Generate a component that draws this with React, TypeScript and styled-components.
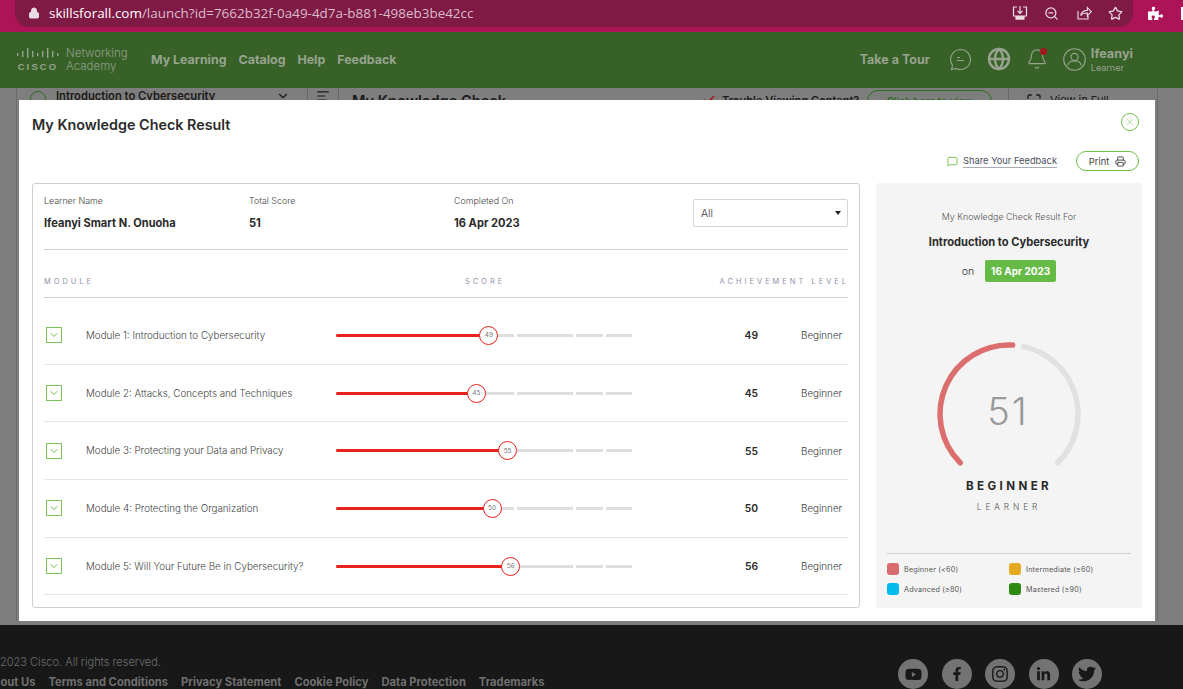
import React from 'react';
import styled, { createGlobalStyle } from 'styled-components';
import { Lock, ZoomOut, Star, Globe, Bell, MessageSquare, Printer, ChevronDown, X, AlignLeft, Maximize, Check } from 'lucide-react';
import { FaPuzzlePiece, FaYoutube, FaFacebookF, FaInstagram, FaLinkedinIn, FaTwitter } from 'react-icons/fa';

const Global = createGlobalStyle`
  html, body { margin: 0; padding: 0; background: #181818; }
  * { box-sizing: border-box; }
  body { font-family: Inter, "Liberation Sans", sans-serif; }
`;

const Page = styled.div`
  width: 1183px; height: 689px; overflow: hidden;
  display: flex; flex-direction: column;
`;

/* Browser chrome */
const BrowserBar = styled.div`
  height: 32px; flex: none; background: #ad1457; display: flex; align-items: flex-start;
  padding-left: 15px; position: relative; color: #fff; overflow: hidden;
`;
const UrlPill = styled.div`
  width: 1118px; flex: none; height: 27px; background: #7f1a45; border-radius: 0 0 14px 14px;
  display: flex; align-items: center; padding: 0 10px 1px 13px;
  font: 400 13.45px "Open Sans", sans-serif; color: #d9bccb;
`;
const Host = styled.span`color: #fff; margin-left: 9px;`;
const PillIcons = styled.div`
  margin-left: auto; display: flex; align-items: center; gap: 16.5px; color: #e9dbe2;
`;
const ExtIcons = styled.div`
  margin-left: 15px; height: 27px; display: flex; align-items: center; gap: 18px; flex: none;
`;
const EdgeIcon = styled.div`width: 12px; height: 13px; border: 2px solid #fff;`;

/* Site nav */
const SiteNav = styled.div`
  height: 56px; flex: none; background: #386127; display: flex; align-items: center;
  padding: 0 50px 2px 16px; color: #96a38f;
`;
const LogoMark = styled.div`
  width: 44px; display: flex; flex-direction: column; align-items: center; margin-top: 1px;
`;
const CiscoWord = styled.span`
  font: 700 9.4px "Liberation Sans", sans-serif; letter-spacing: 2.2px; line-height: 10px; margin-top: 1px;
`;
const LogoText = styled.div`
  margin: 2px 0 0 6px; width: 85px; font-weight: 300; font-size: 11.5px; line-height: 13px; color: #8f9d88;
`;
const NavLink = styled.span`
  font-weight: 700; font-size: 12.4px; margin-right: 12px; white-space: nowrap;
`;
const NavRight = styled.div`margin-left: auto; display: flex; align-items: center;`;
const Tour = styled.span`font-weight: 700; font-size: 12.5px; margin-right: 19px;`;
const BellWrap = styled.div`position: relative; display: flex; margin: 0 15px 0 15px;`;
const Dot = styled.i`
  position: absolute; top: 0; right: 1px; width: 7px; height: 7px; border-radius: 50%; background: #a3191f;
`;
const UserText = styled.div`margin: 3px 0 0 5px; display: flex; flex-direction: column;`;
const UserName = styled.span`font-weight: 700; font-size: 12.7px; line-height: 14px;`;
const UserRole = styled.span`font-weight: 400; font-size: 9px; line-height: 13px;`;

/* Dimmed page behind the modal */
const Stage = styled.div`
  flex: 1; position: relative; background: #7e7e7e; overflow: hidden; display: flex; color: #1a1a1a;
`;
const Behind = styled.div`
  flex: 1; margin: 0 25px 4px 16px; display: flex; align-items: flex-start;
  border-left: 1px solid #6c6c6c; border-right: 1px solid #6c6c6c;
`;
const BehindCourse = styled.div`
  width: 290px; height: 16px; display: flex; align-items: center; padding-left: 13px; flex: none;
  font-weight: 600; font-size: 11.2px; white-space: nowrap;
`;
const BehindTools = styled.div`
  width: 32px; height: 24px; flex: none; display: flex; justify-content: center; padding-top: 1px;
  border-left: 1px solid #666; border-right: 1px solid #666;
`;
const BehindDisc = styled.i`
  width: 16px; height: 16px; border-radius: 50%; border: 1.5px solid #2d6a1e; margin: 6px 10px 0 0; flex: none;
`;
const BehindTitle = styled.div`
  margin-left: 13px; font-weight: 600; font-size: 14.6px; padding-top: 4px; width: 350px; white-space: nowrap;
`;
const BehindNote = styled.div`
  display: flex; gap: 6px; font-weight: 600; font-size: 11px; padding-top: 5px; width: 165px; white-space: nowrap;
`;
const BehindBtn = styled.div`
  width: 125px; height: 22px; border: 1.5px solid #2d6a1e; border-radius: 12px; margin-top: 2px; flex: none;
  color: #2d6a1e; font-weight: 600; font-size: 10px; text-align: center; padding-top: 4px;
`;
const BehindFull = styled.div`
  display: flex; gap: 8px; font-size: 11px; padding: 5px 0 0 17px; margin-left: 16px; white-space: nowrap;
  border-left: 1px solid #666; height: 24px;
`;

/* Modal */
const Modal = styled.div`
  position: absolute; left: 19px; top: 12px; width: 1136px; height: 521px;
  background: #fff; padding: 0 13px; display: flex; flex-direction: column;
`;
const ModalHead = styled.div`
  height: 83px; flex: none; display: flex; flex-direction: column;
`;
const TitleRow = styled.div`
  height: 50px; display: flex; align-items: flex-start; justify-content: space-between; padding-top: 16px;
`;
const Title = styled.h2`
  margin: 0; font-weight: 600; font-size: 14.35px; line-height: 18px; color: #2b2b2b;
`;
const CloseBtn = styled.span`
  width: 18px; height: 18px; margin: -3px 3px 0 0; border: 1px solid #6ebe4a; border-radius: 50%;
  color: #6ebe4a; display: flex; align-items: center; justify-content: center;
`;
const ActionRow = styled.div`
  display: flex; justify-content: flex-end; align-items: center; height: 22px; margin-right: 3px;
`;
const Feedback = styled.span`
  display: flex; align-items: center; gap: 5px; font-size: 9.3px; margin-right: 19px; color: #4a4f5c;
`;
const Underlined = styled.span`border-bottom: 1px solid #a9adb6; line-height: 12px;`;
const PrintBtn = styled.span`
  width: 63px; height: 20px; border: 1px solid #6ebe4a; border-radius: 10px; font-size: 9.3px; color: #444;
  display: flex; align-items: center; justify-content: center; gap: 6px;
`;
const Body = styled.div`
  display: grid; grid-template-columns: 828px 266px; gap: 16px; height: 425px;
`;

/* Left card */
const Card = styled.div`
  border: 1px solid #cfcfcf; border-radius: 3px; padding: 0 11px;
`;
const InfoBar = styled.div`
  height: 66px; display: flex; align-items: flex-start; border-bottom: 1px solid #cfcfcf; padding-top: 11px;
`;
const InfoCol = styled.div<{ $w: number }>`
  width: ${p => p.$w}px; display: flex; flex-direction: column;
`;
const InfoLabel = styled.span`font-weight: 300; font-size: 8.9px; line-height: 12px; color: #444;`;
const InfoValue = styled.span`font-weight: 700; font-size: 11.1px; line-height: 14px; margin-top: 9px; color: #2a2a2a;`;
const SelectBox = styled.div`
  width: 155px; height: 28px; margin-top: 4px; border: 1px solid #d6d6d6; border-radius: 2px;
  display: flex; align-items: center; justify-content: space-between; padding: 0 6px 0 7px;
  font-weight: 300; font-size: 10.5px; color: #333;
`;
const Caret = styled.i`
  width: 0; height: 0; border-left: 3.5px solid transparent; border-right: 3.5px solid transparent; border-top: 4px solid #222;
`;
const TableHead = styled.div`
  height: 48px; display: grid; grid-template-columns: 421px auto 1fr; align-items: end; padding-bottom: 10px;
  border-bottom: 1px solid #cfcfcf;
  font-weight: 400; font-size: 7.4px; line-height: 10px; letter-spacing: 3.05px; color: #8b93a9;
`;
const HeadRight = styled.span`text-align: right; white-space: nowrap; margin-right: -1px;`;
const List = styled.div`padding-top: 9px;`;
const Row = styled.div`
  height: 57.7px; display: grid; grid-template-columns: 42px 250px 296px 1fr 47px; align-items: center;
  border-bottom: 1px solid #e4e4ef;
`;
const Toggle = styled.span`
  width: 16px; height: 16px; margin-left: 2px; border: 1px solid #7cc45c; color: #6ebe4a;
  display: flex; align-items: center; justify-content: center;
`;
const ModuleName = styled.span`
  font-weight: 300; font-size: 9.8px; color: #444; white-space: nowrap;
`;
const Track = styled.div`position: relative; height: 3px; display: flex; gap: 3px;`;
const Segment = styled.i<{ $w: number }>`width: ${p => p.$w}px; height: 3px; background: #dedede;`;
const Fill = styled.i`position: absolute; left: 0; top: 0; height: 3px; background: #e8231c; border-radius: 2px;`;
const Thumb = styled.span`
  position: absolute; top: -8px; width: 19px; height: 19px; margin-left: -9.5px; border-radius: 50%;
  border: 1px solid #e8231c; background: #fff; color: #777; font-size: 6.5px;
  display: flex; align-items: center; justify-content: center;
`;
const Score = styled.span`
  text-align: right; padding-right: 43px; font-weight: 600; font-size: 10.3px; color: #2a2a2a;
`;
const Level = styled.span`font-weight: 300; font-size: 9.85px; color: #3a3a3a; white-space: nowrap;`;

/* Right panel */
const Side = styled.div`
  background: #f4f4f4; border-radius: 3px; padding: 28px 11px 0; display: flex; flex-direction: column; align-items: center;
`;
const SideLabel = styled.span`font-weight: 300; font-size: 8.9px; line-height: 12px; color: #555;`;
const SideCourse = styled.strong`font-weight: 700; font-size: 11.1px; line-height: 14px; margin-top: 12px; color: #2a2a2a;`;
const DateRow = styled.div`display: flex; align-items: center; gap: 11px; margin-top: 11px; font-weight: 300; font-size: 10.5px; color: #333;`;
const DateTag = styled.span`
  width: 71px; height: 22px; border-radius: 2px; background: #66bb47; color: #fff; font-weight: 700; font-size: 10px;
  display: flex; align-items: center; justify-content: center;
`;
const Gauge = styled.div`
  position: relative; width: 150px; height: 130px; margin-top: 57px; color: #999;
  font-weight: 300; font-size: 38px; letter-spacing: 2px;
`;
const GaugeValue = styled.span`
  position: absolute; left: 0; right: 2px; top: 52px; text-align: center; line-height: 40px;
`;
const LevelName = styled.strong`
  font-weight: 700; font-size: 11.6px; letter-spacing: 3.4px; line-height: 14px; margin-top: 10px; color: #2a2a2a;
`;
const LevelRole = styled.span`
  font-weight: 300; font-size: 8.3px; letter-spacing: 3.9px; line-height: 10px; margin-top: 9px; color: #555;
`;
const Legend = styled.div`
  margin-top: 41px; width: 244px; border-top: 1px solid #cfcfcf; padding-top: 9px;
  display: grid; grid-template-columns: 122px 122px; row-gap: 8px;
`;
const LegendItem = styled.div`
  display: flex; align-items: center; gap: 5px; font-size: 7.2px; letter-spacing: 0.2px; color: #555; height: 12px; white-space: nowrap;
`;
const Swatch = styled.i<{ $c: string }>`width: 12px; height: 12px; border-radius: 3px; background: ${p => p.$c};`;

/* Footer */
const Footer = styled.div`
  height: 64px; flex: none; background: #181818; display: flex; padding-top: 30px; color: #6f6f6f; position: relative;
`;
const FooterText = styled.div`margin-left: -10px; display: flex; flex-direction: column;`;
const Copy = styled.span`font-weight: 300; font-size: 11px; line-height: 14px;`;
const Links = styled.div`margin-left: -5px; display: flex; gap: 13px; margin-top: 6px; font-weight: 700; font-size: 11.2px; line-height: 14px; white-space: nowrap;`;
const Socials = styled.div`margin-left: auto; margin-right: 81px; display: flex; gap: 13.5px; margin-top: 4px;`;
const Social = styled.span`
  width: 30px; height: 30px; border-radius: 50%; background: #737373; color: #181818;
  display: flex; align-items: center; justify-content: center;
`;

const polar = (deg: number, r: number, c = 75) => {
  const a = (deg - 90) * Math.PI / 180;
  return `${(c + r * Math.cos(a)).toFixed(2)} ${(c + r * Math.sin(a)).toFixed(2)}`;
};
const arc = (from: number, to: number, r = 69) =>
  `M${polar(from, r)} A${r} ${r} 0 ${to - from > 180 ? 1 : 0} 1 ${polar(to, r)}`;

const modules = [
  ['Module 1: Introduction to Cybersecurity', 49],
  ['Module 2: Attacks, Concepts and Techniques', 45],
  ['Module 3: Protecting your Data and Privacy', 55],
  ['Module 4: Protecting the Organization', 50],
  ['Module 5: Will Your Future Be in Cybersecurity?', 56],
] as const;

const CiscoBars = () => (
  <svg width="44" height="13" viewBox="0 0 44 13" fill="currentColor">
    {[[1,5,3],[6,3,6],[11,0,10],[16,3,6],[21,5,3],[26,3,6],[31,0,10],[36,3,6],[41,5,3]].map(([x, y, h]) => (
      <rect key={x} x={x} y={y} width="1.4" height={h} />
    ))}
  </svg>
);

export default function App() {
  return (
    <Page>
      <Global />
      <BrowserBar>
        <UrlPill>
          <Lock size={12} fill="#e9dbe2" strokeWidth={2} color="#e9dbe2" />
          <Host>skillsforall.com</Host>/launch?id=7662b32f-0a49-4d7a-b881-498eb3be42cc
          <PillIcons>
            <svg width="16" height="16" viewBox="0 0 16 16" fill="none" stroke="currentColor" strokeWidth="1.2">
              <path d="M5 2H1.5v9h13V2H11M8 1v7M5.5 5.8 8 8.3l2.5-2.5M4 14h8" />
              <path d="M4 11.5h8v2.5H4z" fill="currentColor" />
            </svg>
            <ZoomOut size={15} />
            <svg width="16" height="16" viewBox="0 0 24 24" fill="none" stroke="currentColor" strokeWidth="1.7">
              <path d="M3 9v12h15v-5M7 16c1-5 5-8 10-8V4l6 6-6 6v-4c-4 0-8 1-10 4z" />
            </svg>
            <Star size={15} />
          </PillIcons>
        </UrlPill>
        <ExtIcons>
          <FaPuzzlePiece size={15} />
          <EdgeIcon />
        </ExtIcons>
      </BrowserBar>

      <SiteNav>
        <LogoMark>
          <CiscoBars />
          <CiscoWord>CISCO</CiscoWord>
        </LogoMark>
        <LogoText>Networking<br />Academy</LogoText>
        <NavLink>My Learning</NavLink>
        <NavLink>Catalog</NavLink>
        <NavLink>Help</NavLink>
        <NavLink>Feedback</NavLink>
        <NavRight>
          <Tour>Take a Tour</Tour>
          <svg width="23" height="23" viewBox="0 0 23 23" fill="none" stroke="currentColor" strokeWidth="1.1">
            <path d="M11.5 1.5a10 10 0 1 1-4.6 18.9L2.5 21.5l1-4.2A10 10 0 0 1 11.5 1.5zM8 9.5h3M8 12.5h7" />
          </svg>
          <Globe size={24} strokeWidth={2.4} style={{ marginLeft: 15 }} />
          <BellWrap>
            <Bell size={22} strokeWidth={1.3} />
            <Dot />
          </BellWrap>
          <svg width="23" height="23" viewBox="0 0 23 23" fill="none" stroke="currentColor" strokeWidth="1.1">
            <circle cx="11.5" cy="11.5" r="10.8" />
            <circle cx="11.5" cy="9" r="3.6" />
            <path d="M5 17.5c0-3 3-4.5 6.5-4.5s6.5 1.5 6.5 4.5" />
          </svg>
          <UserText>
            <UserName>Ifeanyi</UserName>
            <UserRole>Learner</UserRole>
          </UserText>
        </NavRight>
      </SiteNav>

      <Stage>
        <Behind>
          <BehindCourse>
            <BehindDisc />
            Introduction to Cybersecurity
            <ChevronDown size={14} style={{ marginLeft: 61 }} />
          </BehindCourse>
          <BehindTools><AlignLeft size={14} /></BehindTools>
          <BehindTitle>My Knowledge Check</BehindTitle>
          <BehindNote><Check size={14} color="#a3191f" strokeWidth={3} />Trouble Viewing Content?</BehindNote>
          <BehindBtn>Click here to view</BehindBtn>
          <BehindFull><Maximize size={16} />View in Full</BehindFull>
        </Behind>

        <Modal>
          <ModalHead>
            <TitleRow>
              <Title>My Knowledge Check Result</Title>
              <CloseBtn><X size={12} strokeWidth={1} /></CloseBtn>
            </TitleRow>
            <ActionRow>
              <Feedback>
                <MessageSquare size={11} color="#6ebe4a" />
                <Underlined>Share Your Feedback</Underlined>
              </Feedback>
              <PrintBtn>Print <Printer size={11} /></PrintBtn>
            </ActionRow>
          </ModalHead>
          <Body>
            <Card>
              <InfoBar>
                <InfoCol $w={205}>
                  <InfoLabel>Learner Name</InfoLabel>
                  <InfoValue>Ifeanyi Smart N. Onuoha</InfoValue>
                </InfoCol>
                <InfoCol $w={205}>
                  <InfoLabel>Total Score</InfoLabel>
                  <InfoValue>51</InfoValue>
                </InfoCol>
                <InfoCol $w={239}>
                  <InfoLabel>Completed On</InfoLabel>
                  <InfoValue>16 Apr 2023</InfoValue>
                </InfoCol>
                <SelectBox>All<Caret /></SelectBox>
              </InfoBar>
              <TableHead>
                <span>MODULE</span>
                <span>SCORE</span>
                <HeadRight>ACHIEVEMENT LEVEL</HeadRight>
              </TableHead>
              <List>
                {modules.map(([name, score]) => (
                  <Row key={name}>
                    <Toggle><ChevronDown size={12} strokeWidth={2} /></Toggle>
                    <ModuleName>{name}</ModuleName>
                    <Track>
                      <Segment $w={178} />
                      <Segment $w={56} />
                      <Segment $w={27} />
                      <Segment $w={26} />
                      <Fill style={{ width: score * 3.12 }} />
                      <Thumb style={{ left: score * 3.12 }}>{score}</Thumb>
                    </Track>
                    <Score>{score}</Score>
                    <Level>Beginner</Level>
                  </Row>
                ))}
              </List>
            </Card>
            <Side>
              <SideLabel>My Knowledge Check Result For</SideLabel>
              <SideCourse>Introduction to Cybersecurity</SideCourse>
              <DateRow>on <DateTag>16 Apr 2023</DateTag></DateRow>
              <Gauge>
                <svg width="150" height="150" viewBox="0 0 150 150" fill="none" strokeWidth="5.5" strokeLinecap="round">
                  <path d={arc(12, 135)} stroke="#e0e2e1" />
                  <path d={arc(225, 363)} stroke="#dc6e6e" />
                </svg>
                <GaugeValue>51</GaugeValue>
              </Gauge>
              <LevelName>BEGINNER</LevelName>
              <LevelRole>LEARNER</LevelRole>
              <Legend>
                <LegendItem><Swatch $c="#d96b6e" />Beginner (&lt;60)</LegendItem>
                <LegendItem><Swatch $c="#e5a91f" />Intermediate (≥60)</LegendItem>
                <LegendItem><Swatch $c="#00bbee" />Advanced (≥80)</LegendItem>
                <LegendItem><Swatch $c="#2f8a10" />Mastered (≥90)</LegendItem>
              </Legend>
            </Side>
          </Body>
        </Modal>
      </Stage>

      <Footer>
        <FooterText>
          <Copy>©2023 Cisco. All rights reserved.</Copy>
          <Links>
            <span>About Us</span>
            <span>Terms and Conditions</span>
            <span>Privacy Statement</span>
            <span>Cookie Policy</span>
            <span>Data Protection</span>
            <span>Trademarks</span>
          </Links>
        </FooterText>
        <Socials>
          <Social><FaYoutube size={17} /></Social>
          <Social><FaFacebookF size={14} /></Social>
          <Social><FaInstagram size={18} /></Social>
          <Social><FaLinkedinIn size={15} /></Social>
          <Social><FaTwitter size={18} /></Social>
        </Socials>
      </Footer>
    </Page>
  );
}
